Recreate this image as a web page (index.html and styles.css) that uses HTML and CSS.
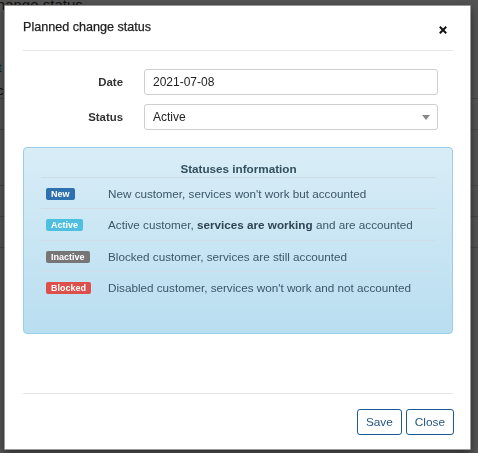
FILE: index.html
```html
<!DOCTYPE html>
<html>
<head>
<meta charset="utf-8">
<link rel="stylesheet" href="styles.css">
</head>
<body>
<div class="page">
  <div class="page-title">Change status</div>
  <div class="page-link">t</div>
  <div class="page-text">c</div>
  <div class="page-rows">
    <div class="page-row"></div>
    <div class="page-row tall"></div>
    <div class="page-row"></div>
    <div class="page-row"></div>
    <div class="page-row tall"></div>
  </div>
</div>
<div class="backdrop"></div>
<div class="modal">
  <div class="modal-header">
    <h4 class="modal-title">Planned change status</h4>
    <span class="close">
      <svg width="8" height="8" viewBox="0 0 8 8"><path d="M0.8 0.8 L7.2 7.2 M7.2 0.8 L0.8 7.2" stroke="#111" stroke-width="2" stroke-linecap="butt"/></svg>
    </span>
  </div>
  <div class="modal-body">
    <div class="form-row">
      <label class="form-label">Date</label>
      <div class="form-control">2021-07-08</div>
    </div>
    <div class="form-row">
      <label class="form-label">Status</label>
      <div class="form-control select">Active<span class="caret"></span></div>
    </div>
    <div class="alert-info">
      <div class="info-title">Statuses information</div>
      <div class="info-row">
        <div class="info-label"><span class="label label-new">New</span></div>
        <div class="info-desc">New customer, services won't work but accounted</div>
      </div>
      <div class="info-row">
        <div class="info-label"><span class="label label-active">Active</span></div>
        <div class="info-desc">Active customer, <b>services are working</b> and are accounted</div>
      </div>
      <div class="info-row">
        <div class="info-label"><span class="label label-inactive">Inactive</span></div>
        <div class="info-desc">Blocked customer, services are still accounted</div>
      </div>
      <div class="info-row">
        <div class="info-label"><span class="label label-blocked">Blocked</span></div>
        <div class="info-desc">Disabled customer, services won't work and not accounted</div>
      </div>
    </div>
  </div>
  <div class="modal-footer">
    <button class="btn">Save</button>
    <button class="btn">Close</button>
  </div>
</div>
</body>
</html>
```

FILE: styles.css
```css
html, body {
  margin: 0;
  padding: 0;
  width: 478px;
  height: 453px;
  overflow: hidden;
  font-family: "Liberation Sans", Arial, sans-serif;
  font-size: 11.7px;
  color: #333;
  background: #fff;
}

.page {
  width: 478px;
  height: 453px;
  background: #f4f4f4;
}

.page-title {
  margin-left: -14px;
  font-size: 15px;
  line-height: 10px;
  color: #333;
}

.page-link {
  margin-top: 50px;
  margin-left: -2px;
  color: #1a5f9e;
  font-size: 13px;
}

.page-text {
  margin-top: 8px;
  margin-left: -3px;
  font-size: 13px;
}

.page-row {
  height: 30px;
  border-top: 1px solid #c8c8c8;
}

.page-row.tall {
  height: 55px;
}

.backdrop {
  position: fixed;
  inset: 0;
  background: rgba(0, 0, 0, 0.66);
}

.modal {
  position: fixed;
  left: 4px;
  top: 5px;
  width: 467px;
  height: 445px;
  box-sizing: border-box;
  background: #fff;
  border: 1px solid #9a9a9a;
  border-radius: 1px;
  box-shadow: 0 3px 9px rgba(0, 0, 0, 0.5);
  display: flex;
  flex-direction: column;
  padding: 0 17px 0 18px;
}

.modal-header {
  display: flex;
  align-items: center;
  justify-content: space-between;
  padding: 13px 0 14px;
  border-bottom: 1px solid #e5e5e5;
}

.modal-title {
  margin: 0;
  font-size: 12.6px;
  line-height: 17px;
  font-weight: normal;
  color: #1e1e1e;
  -webkit-text-stroke: 0.25px #1e1e1e;
}

.close {
  display: flex;
  width: 8px;
  height: 8px;
  margin-right: 6px;
  margin-top: 4px;
}

.modal-body {
  flex: 1;
  padding-top: 18px;
  display: flex;
  flex-direction: column;
}

.form-row {
  display: grid;
  grid-template-columns: 100px 294px;
  column-gap: 21px;
  align-items: center;
  margin-bottom: 9px;
}

.form-label {
  text-align: right;
  font-weight: bold;
  font-size: 11.4px;
  color: #333;
}

.form-control {
  height: 26px;
  box-sizing: border-box;
  border: 1px solid #cfcfcf;
  border-radius: 3px;
  padding: 0 8px;
  line-height: 24px;
  font-size: 12px;
  color: #222;
  background: #fff;
  display: flex;
  align-items: center;
  justify-content: space-between;
}

.caret {
  width: 0;
  height: 0;
  border-left: 4px solid transparent;
  border-right: 4px solid transparent;
  border-top: 5px solid #888;
  margin-right: -1px;
  margin-top: 1px;
}

.alert-info {
  margin-top: 8px;
  height: 187px;
  box-sizing: border-box;
  border: 1px solid #9acfea;
  border-radius: 4px;
  background: linear-gradient(to bottom, #d9edf7 0%, #b9def0 100%);
  padding: 12px 16px 0 17px;
  color: #3a5466;
}

.info-title {
  text-align: center;
  font-weight: bold;
  line-height: 17px;
  color: #34505f;
}

.info-row {
  display: grid;
  grid-template-columns: 62px 1fr;
  align-items: center;
  height: 31px;
  box-sizing: border-box;
  border-top: 1px solid #cfdee6;
  line-height: 17px;
}

.info-row:nth-child(3), .info-row:nth-child(5) {
  height: 32px;
}

.info-label {
  padding-left: 5px;
  display: flex;
  align-items: center;
}

.info-desc {
  padding-left: 5px;
  color: #3c5668;
}

.info-desc b {
  color: #2f4554;
}

.label {
  display: inline-block;
  font-size: 9px;
  font-weight: bold;
  line-height: 12px;
  height: 12px;
  padding: 0 5px;
  color: #fff;
  border-radius: 2px;
  margin-top: 1px;
}

.label-new { background: #2f71ae; }
.label-active { background: #4fbfe0; }
.label-inactive { background: #767676; }
.label-blocked { background: #dd4f4a; }

.modal-footer {
  border-top: 1px solid #e5e5e5;
  padding: 15px 0 14px;
  display: flex;
  justify-content: flex-end;
  gap: 5px;
}

.btn {
  font-family: "Liberation Sans", Arial, sans-serif;
  font-size: 11.8px;
  height: 26px;
  padding: 0 8px;
  border: 1px solid #1c5a94;
  border-radius: 3px;
  background: #fff;
  color: #245580;
  margin: 0;
  margin-right: -1px;
}
```
